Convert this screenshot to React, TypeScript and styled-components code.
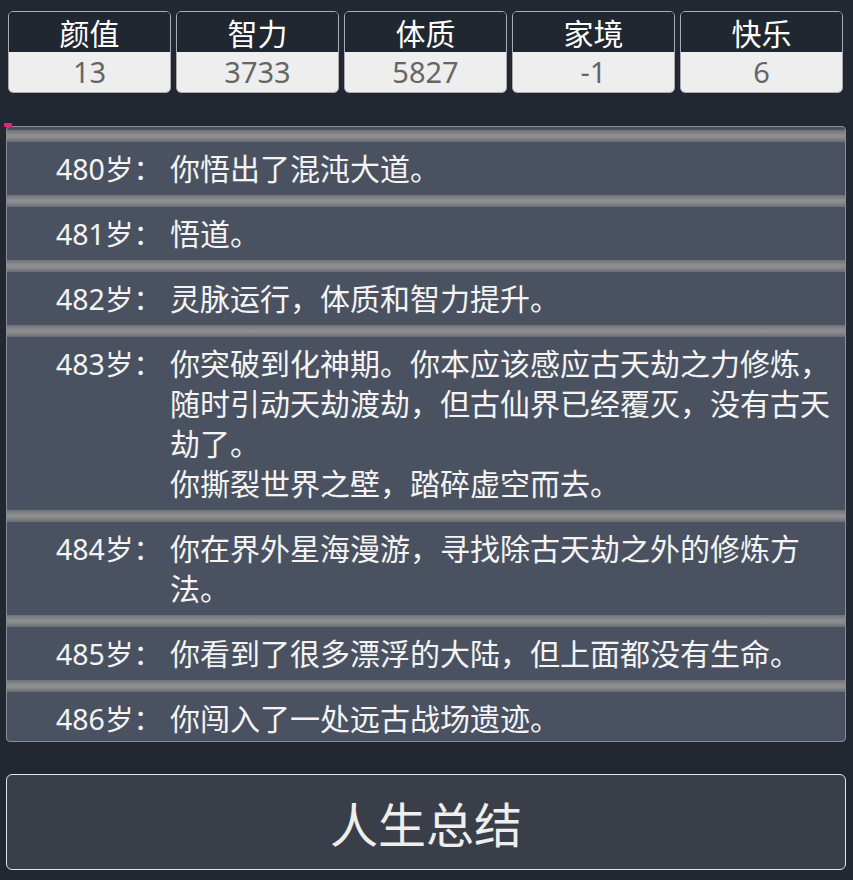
import React from 'react';
import styled, { createGlobalStyle } from 'styled-components';

const GlobalStyle = createGlobalStyle`
	html, body {
		margin: 0;
		padding: 0;
		background: #222731;
	}

	body {
		font-family: "Noto Sans", "Noto Sans CJK SC", sans-serif;
		color: #eeeeee;
	}
`;

const Page = styled.div`
	position: relative;
	width: 853px;
	height: 880px;
	padding: 11px 0 0 0;
	box-sizing: border-box;
`;

// small pink tick sitting on the corner of the trajectory box
const Marker = styled.div`
	position: absolute;
	left: 4px;
	top: 123px;
	width: 8px;
	height: 4px;
	background: #e8207a;
`;

const PropertyRow = styled.ul`
	display: flex;
	gap: 5px;
	margin: 0;
	padding: 0 10px 0 8px;
	list-style: none;
`;

const PropertyCard = styled.li`
	flex: 1;
	display: flex;
	flex-direction: column;
	border: 1px solid #a9abaf;
	border-radius: 5px;
	overflow: hidden;
	text-align: center;
`;

const PropertyName = styled.div`
	height: 40px;
	line-height: 44px;
	font-size: 30px;
	background: #212731;
	color: #ffffff;
`;

const PropertyValue = styled.div`
	height: 40px;
	line-height: 40px;
	font-size: 29px;
	background: #eeeeee;
	color: #666666;
`;

const Trajectory = styled.ul`
	margin: 33px 7px 0 6px;
	padding: 3px 0 0 0;
	height: 616px;
	box-sizing: border-box;
	list-style: none;
	background: #4a5261;
	border: 1px solid #8a8d92;
	border-radius: 4px;
	overflow: hidden;
`;

const Year = styled.li`
	position: relative;
	display: flex;
	margin-top: 12px;
	padding: 7px 5px 6px 49px;
	font-size: 28px;
	line-height: 40px;
	color: #f4f4f4;

	/* grey ridge between the years */
	&::after {
		content: '';
		position: absolute;
		left: 0;
		right: 0;
		top: -12px;
		height: 12px;
		background: linear-gradient(180deg, #6f7277 0%, #8d8f93 45%, #8a8c90 60%, #6a6d72 100%);
	}
`;

const Age = styled.span`
	flex: none;
	width: 114px;
	white-space: nowrap;
	font-size: 28.5px;
`;

const Event = styled.span`
	flex: 1;
	font-size: 30px;
	line-break: strict;
`;

const SummaryButton = styled.button`
	display: block;
	width: 840px;
	height: 96px;
	margin: 32px 0 0 6px;
	background: #393e48;
	border: 1px solid #e4e4e4;
	border-radius: 6px;
	color: #eeeeee;
	font-family: "Noto Sans CJK SC", sans-serif;
	font-size: 48px;
	cursor: pointer;
`;

const properties = [
	{ name: '颜值', value: 13 },
	{ name: '智力', value: 3733 },
	{ name: '体质', value: 5827 },
	{ name: '家境', value: -1 },
	{ name: '快乐', value: 6 },
];

const trajectory = [
	{ age: 480, lines: ['你悟出了混沌大道。'] },
	{ age: 481, lines: ['悟道。'] },
	{ age: 482, lines: ['灵脉运行，体质和智力提升。'] },
	{ age: 483, lines: ['你突破到化神期。你本应该感应古天劫之力修炼，随时引动天劫渡劫，但古仙界已经覆灭，没有古天劫了。', '你撕裂世界之壁，踏碎虚空而去。'] },
	{ age: 484, lines: ['你在界外星海漫游，寻找除古天劫之外的修炼方法。'] },
	{ age: 485, lines: ['你看到了很多漂浮的大陆，但上面都没有生命。'] },
	{ age: 486, lines: ['你闯入了一处远古战场遗迹。'] },
];

export default function App() {
	return (
		<Page>
			<GlobalStyle />
			<PropertyRow>
				{properties.map((p) => (
					<PropertyCard key={p.name}>
						<PropertyName>{p.name}</PropertyName>
						<PropertyValue>{p.value}</PropertyValue>
					</PropertyCard>
				))}
			</PropertyRow>

			<Marker />

			<Trajectory>
				{trajectory.map((t) => (
					<Year key={t.age}>
						<Age>{t.age}岁：</Age>
						<Event>
							{t.lines.map((line, i) => (
								<React.Fragment key={i}>
									{i > 0 && <br />}
									{line}
								</React.Fragment>
							))}
						</Event>
					</Year>
				))}
			</Trajectory>

			<SummaryButton>人生总结</SummaryButton>
		</Page>
	);
}
